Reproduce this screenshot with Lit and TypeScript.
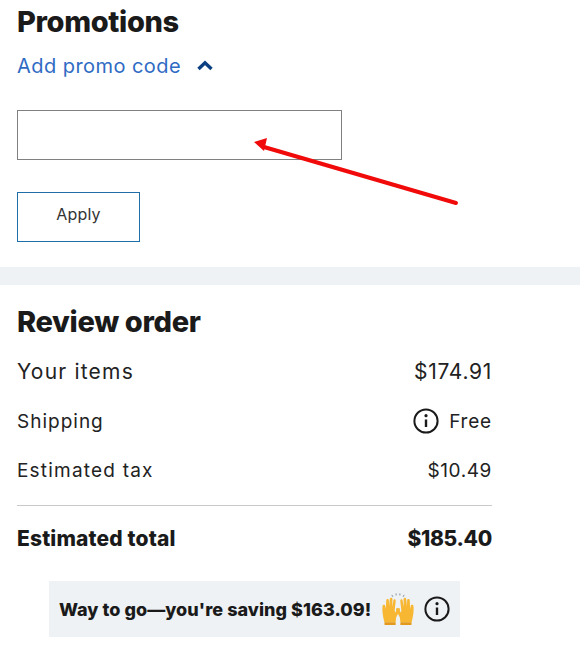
import { LitElement, html, css, svg } from "lit";
import { customElement } from "lit/decorators.js";

const info = (size: number) => html`<svg class="info" width=${size} height=${size} viewBox="0 0 26 26" fill="none" stroke="#1a1a1a">
  <circle cx="13" cy="13" r="11.6" stroke-width="2"/>
  <path d="M13 11.5V19" stroke-width="2.4"/>
  <circle cx="13" cy="7.7" r="1.6" fill="#1a1a1a" stroke="none"/>
</svg>`;

const hand = svg`<path d="M3 30 C1.500 24 0.500 18 1 13 C1.300 11 3.800 11 4 13 L4.600 16 L5 7 C5.200 5 7.600 5 7.800 7 L8 13 L8.800 5.500 C9 3.500 11.500 3.500 11.600 5.500 L11.300 14 L12.600 7 C13 5 15.200 5.400 15.100 7.300 L14 17 L14.300 20 L17 15.500 C18.200 14 20.200 15.200 19.500 17 L15.500 25 L15 30 Z" fill="#f7b733"/><path d="M3 30 L15 30 L15 33 L3.300 33 Z" fill="#e39a1c"/>`;

@customElement("app-root")
export class AppRoot extends LitElement {
  static styles = css`
    :host { display: block; position: relative; width: 580px; height: 654px; overflow: hidden; background: #fff; color: #1a1a1a; font-family: Inter, "Liberation Sans", sans-serif; }
    h2 { margin: 0; font-size: 29px; line-height: 34px; font-weight: 800; letter-spacing: -0.35px; }
    .promo { padding: 5px 17px 25px; display: flex; flex-direction: column; align-items: flex-start; }
    .toggle { display: flex; align-items: center; gap: 16px; margin-top: 11px; height: 32px; color: #2f6bc4; font-size: 20px; letter-spacing: 0.45px; }
    .chev { margin-top: -1px; }
    .field { box-sizing: border-box; width: 325px; height: 50px; border: 1px solid #808080; margin-top: 28px; background: #fff; }
    .apply { box-sizing: border-box; width: 123px; height: 50px; margin-top: 32px; padding-bottom: 8px; border: 1px solid #1f6ea8; background: #fff; color: #333; font: 400 16px Inter, "Liberation Sans", sans-serif; letter-spacing: 0.2px; }
    .band { height: 18px; background: #eff2f5; }
    .review { padding: 20px 17px 0; }
    .lines { width: 475px; display: flex; flex-direction: column; margin-top: 7px; }
    .row { display: flex; justify-content: space-between; align-items: center; height: 50px; font-size: 19px; letter-spacing: 1px; color: #222; }
    .row.first { height: 50px; font-size: 21px; letter-spacing: 1.2px; }
    .row.first .price { letter-spacing: 0.7px; }
    .row.tax { height: 49px; letter-spacing: 1.2px; }
    .row.tax .price { letter-spacing: 0.6px; }
    .row .right { display: flex; align-items: center; gap: 10px; letter-spacing: 0.8px; }
    .rule { height: 1px; background: #c9c9c9; margin-top: 10px; }
    .total { display: flex; justify-content: space-between; align-items: center; height: 64px; font-size: 21px; font-weight: 800; letter-spacing: 0.15px; color: #1a1a1a; }
    .total .price { letter-spacing: -0.3px; }
    .save { margin: 11px 0 0 32px; width: 411px; height: 56px; box-sizing: border-box; background: #eff2f5; display: flex; align-items: center; padding-left: 10px; font-size: 18px; font-weight: 800; letter-spacing: 0.05px; white-space: nowrap; }
    .hands { margin-left: 11px; }
    .save .info { margin-left: 10px; }
    .arrow { position: absolute; left: 250px; top: 135px; }
  `;

  render() {
    return html`
      <section class="promo">
        <h2>Promotions</h2>
        <div class="toggle">
          <span>Add promo code</span>
          <svg class="chev" width="16" height="11" viewBox="0 0 16 11" fill="none"><path d="M1.500 9 L8 2.800 L14.500 9" stroke="#0b3f82" stroke-width="3.400"/></svg>
        </div>
        <div class="field"></div>
        <button class="apply">Apply</button>
      </section>
      <div class="band"></div>
      <section class="review">
        <h2>Review order</h2>
        <div class="lines">
          <div class="row first"><span>Your items</span><span class="price">$174.91</span></div>
          <div class="row"><span>Shipping</span><span class="right">${info(26)}<span>Free</span></span></div>
          <div class="row tax"><span>Estimated tax</span><span class="price">$10.49</span></div>
          <div class="rule"></div>
          <div class="total"><span>Estimated total</span><span class="price">$185.40</span></div>
        </div>
        <div class="save">
          <span>Way to go—you're saving $163.09!</span>
          <svg class="hands" width="32" height="32" viewBox="0 0 33 34">
            <g transform="translate(-1 1)">${hand}</g>
            <g transform="translate(34 1) scale(-1 1)">${hand}</g>
            <path d="M10 2l1 2M14.500 0.500v2M18.500 0.500v2M23 2l-1 2" stroke="#7a8a99" stroke-width="1" fill="none"/>
          </svg>
          ${info(26)}
        </div>
      </section>
      <svg class="arrow" width="215" height="75" viewBox="0 0 215 75" fill="none">
        <path d="M206 68 L14 12" stroke="#f00a0a" stroke-width="4" stroke-linecap="round"/>
        <path d="M4 7 L17 3 L14 16 Z" fill="#f00a0a"/>
      </svg>
    `;
  }
}
